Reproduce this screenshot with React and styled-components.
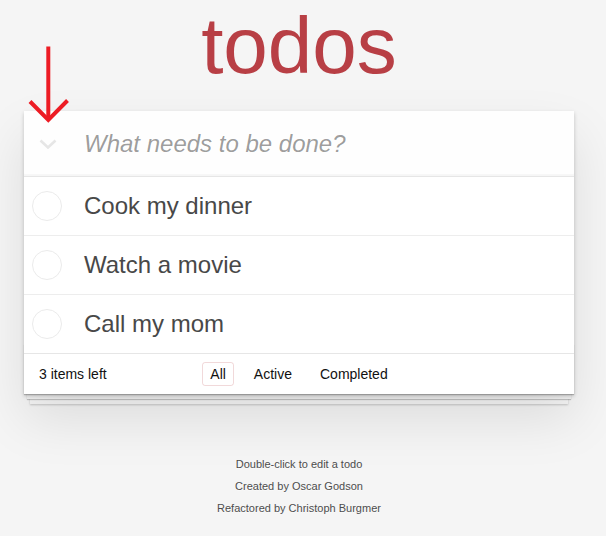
import React from 'react'
import styled, { createGlobalStyle } from 'styled-components'

const GlobalStyle = createGlobalStyle`
  * { box-sizing: border-box; }
  body {
    margin: 0;
    background: #f5f5f5;
    color: #111;
    font: 14px "Liberation Sans", Helvetica, Arial, sans-serif;
    -webkit-font-smoothing: antialiased;
  }
`

const todos = [
  { id: 1, title: 'Cook my dinner' },
  { id: 2, title: 'Watch a movie' },
  { id: 3, title: 'Call my mom' },
]

const filters = ['All', 'Active', 'Completed']

function App() {
  return (
    <>
      <GlobalStyle />
      <Page>
        <Title>todos</Title>
        <Card>
          <Header>
            <ToggleAll>
              <svg width="18" height="10" viewBox="0 0 18 10">
                <polyline points="1.5,1.5 9,8.5 16.5,1.5" fill="none" stroke="#e6e6e6" strokeWidth="2.6" />
              </svg>
            </ToggleAll>
            <NewTodo placeholder="What needs to be done?" />
          </Header>
          <TodoList>
            {todos.map(todo => (
              <TodoItem key={todo.id}>
                <Toggle />
                <Label>{todo.title}</Label>
              </TodoItem>
            ))}
          </TodoList>
          <Footer>
            <Count>3 items left</Count>
            <Filters>
              {filters.map(f => (
                <FilterLink key={f} href="#" selected={f === 'All'}>{f}</FilterLink>
              ))}
            </Filters>
            <span />
          </Footer>
        </Card>
        <Info>
          <p>Double-click to edit a todo</p>
          <p>Created by <a href="#">Oscar Godson</a></p>
          <p>Refactored by <a href="#">Christoph Burgmer</a></p>
        </Info>
        <Arrow width="56" height="86" viewBox="0 0 56 86">
          <line x1="28.3" y1="6.5" x2="28.3" y2="78" stroke="#ed1c24" strokeWidth="4" />
          <polyline points="10,61.5 28.3,80 47.5,60.5" fill="none" stroke="#ed1c24" strokeWidth="4" />
        </Arrow>
      </Page>
    </>
  )
}

export default App

const Page = styled.div`
  position: relative;
  width: 550px;
  margin-left: 24px;
`

const Title = styled.h1`
  margin: 0;
  font-size: 80px;
  font-weight: 400;
  line-height: 92px;
  text-align: center;
  color: #b83f45;
`

const Card = styled.section`
  position: relative;
  margin-top: 19px;
  background: #fff;
  box-shadow: 0 2px 4px 0 rgba(0, 0, 0, 0.2), 0 25px 50px 0 rgba(0, 0, 0, 0.1);
`

const Header = styled.header`
  display: flex;
  align-items: center;
  height: 65px;
  background: rgba(0, 0, 0, 0.003);
  box-shadow: inset 0 -2px 1px rgba(0, 0, 0, 0.03);
`

const ToggleAll = styled.div`
  width: 60px;
  height: 65px;
  display: flex;
  align-items: center;
  padding-left: 15px;
`

const NewTodo = styled.input`
  flex: 1;
  height: 65px;
  padding: 16px 16px 16px 0;
  border: none;
  outline: none;
  background: transparent;
  font: inherit;
  font-size: 24px;
  color: #484848;
  &::placeholder {
    font-style: italic;
    color: rgba(0, 0, 0, 0.4);
  }
`

const TodoList = styled.ul`
  margin: 0;
  padding: 0;
  list-style: none;
  border-top: 1px solid #e6e6e6;
`

const TodoItem = styled.li`
  display: flex;
  align-items: center;
  border-bottom: 1px solid #ededed;
  &:last-child { border-bottom: none; }
`

const Toggle = styled.span`
  flex: none;
  width: 30px;
  height: 30px;
  margin: 0 22px 0 8px;
  border: 1px solid #ebebeb;
  border-radius: 50%;
`

const Label = styled.label`
  padding: 15px 15px 15px 0;
  font-size: 24px;
  line-height: 28px;
  color: #484848;
`

const Footer = styled.footer`
  position: relative;
  display: grid;
  grid-template-columns: 1fr auto 1fr;
  align-items: center;
  height: 41px;
  padding: 0 15px;
  border-top: 1px solid #e6e6e6;
  &::before {
    content: '';
    position: absolute;
    left: 0;
    right: 0;
    bottom: 0;
    height: 50px;
    overflow: hidden;
    z-index: -1;
    box-shadow: 0 1px 1px rgba(0, 0, 0, 0.2), 0 8px 0 -3px #f6f6f6,
      0 9px 1px -3px rgba(0, 0, 0, 0.2), 0 16px 0 -6px #f6f6f6,
      0 17px 2px -6px rgba(0, 0, 0, 0.2);
  }
`

const Count = styled.span`
  font-size: 14px;
`

const Filters = styled.nav`
  display: flex;
  gap: 12px;
`

const FilterLink = styled.a`
  padding: 3px 7px;
  border: 1px solid ${p => (p.selected ? 'rgba(184, 63, 69, 0.2)' : 'transparent')};
  border-radius: 3px;
  color: inherit;
  text-decoration: none;
  font-size: 14px;
  line-height: 16px;
`

const Info = styled.footer`
  display: flex;
  flex-direction: column;
  gap: 11px;
  margin-top: 65px;
  color: #4d4d4d;
  font-size: 11px;
  text-align: center;
  text-shadow: 0 1px 0 rgba(255, 255, 255, 0.5);
  p { margin: 0; line-height: 1; }
  a { color: inherit; text-decoration: none; }
`

const Arrow = styled.svg`
  position: absolute;
  left: -4px;
  top: 40px;
  z-index: 2;
`
